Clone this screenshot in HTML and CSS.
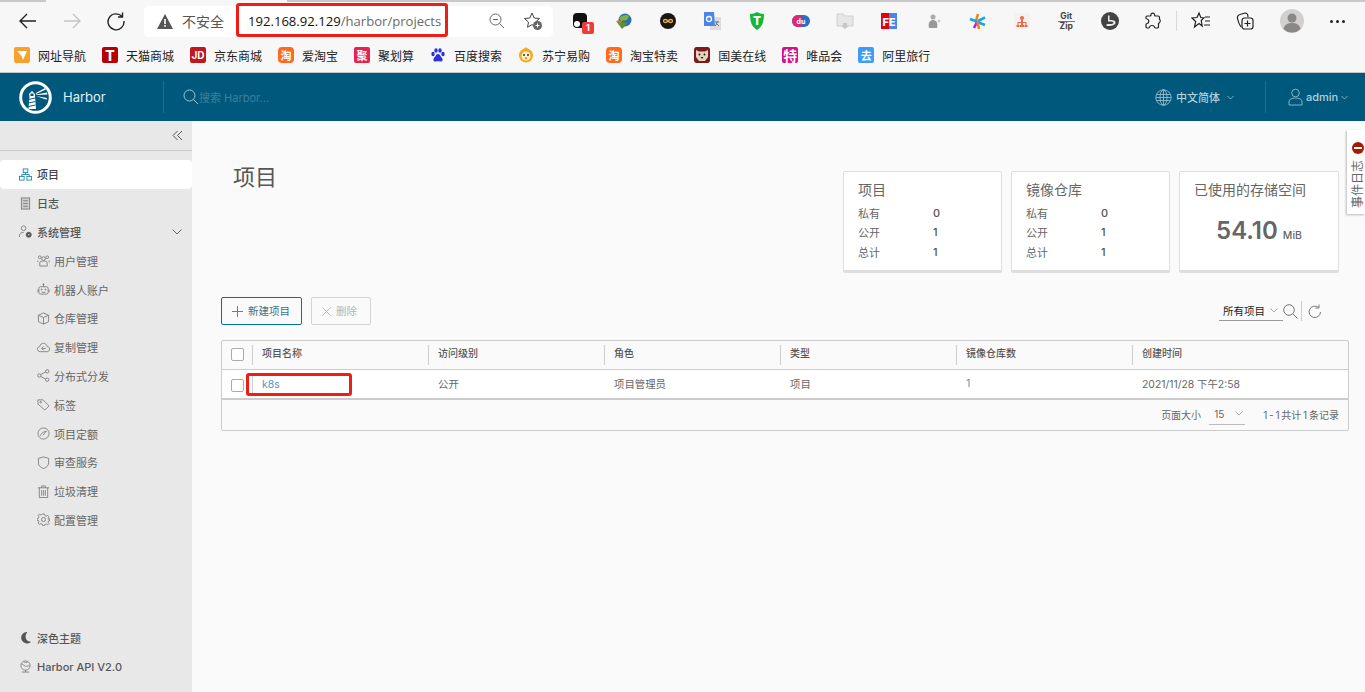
FILE: index.html
```html
<!DOCTYPE html>
<html lang="zh-CN">
<head>
    <meta charset="UTF-8">
    <title>Harbor</title>
    <link rel="stylesheet" href="styles.css">
</head>
<body>
    <!-- Browser toolbar -->
    <div class="browser-tabs"><div class="tab-active"></div></div>
    <div class="toolbar">
        <div class="nav-btn"><svg width="20" height="20" viewBox="0 0 20 20" class="tb-icon"><path d="M18 10H2M9 3l-7 7 7 7"/></svg></div>
        <div class="nav-btn"><svg width="20" height="20" viewBox="0 0 20 20" class="tb-icon off"><path d="M2 10h16M11 3l7 7-7 7"/></svg></div>
        <div class="nav-btn"><svg width="20" height="20" viewBox="0 0 20 20" class="tb-icon"><path d="M16 5.500A8 8 0 1 0 18 10M16.500 1.500v4.500h-4.500"/></svg></div>
        <div class="address">
            <svg width="16" height="15" viewBox="0 0 16 15"><path d="M8 0l8 15H0z" fill="#555"/><path d="M7.200 5h1.600v5H7.200zM7.200 11h1.600v1.700H7.200z" fill="#fff"/></svg>
            <span class="not-safe">不安全</span>
            <span class="url"><b>192.168.92.129</b>/harbor/projects</span>
            <svg class="addr-zoom" width="16" height="16" viewBox="0 0 16 16"><circle cx="6.500" cy="6.500" r="5.500"/><path d="M10.500 10.500L15 15M4 6.500h5"/></svg>
            <svg class="addr-star" width="20" height="20" viewBox="0 0 20 20"><path d="M9 2l2.200 5 5.300.5-4 3.600 1 5.200L9 13.600l-4.500 2.700 1-5.200-4-3.600L6.800 7z"/><circle cx="14.500" cy="14.500" r="4.500" fill="#666" stroke="none"/><path d="M12.500 14.500h4M14.500 12.500v4" stroke="#fff"/></svg>
        </div>
        <div class="extensions">
            <div class="ext"><svg width="16" height="18" viewBox="0 0 16 18"><rect x="1" y="1" width="14" height="15" rx="4" fill="#111"/><circle cx="5" cy="12" r="3" fill="#fff"/></svg><span class="ext-badge">1</span></div>
            <div class="ext"><svg width="18" height="18" viewBox="0 0 18 18"><circle cx="10" cy="8" r="6.500" fill="#2f6fb0"/><path d="M4 6c3-3 8-4 10-2l-2 4-6 1z" fill="#7cb342"/><path d="M1 9l12 2-6 6z" fill="#5d8f2a"/><path d="M2 8l5 1-2 3z" fill="#e0703a"/></svg></div>
            <div class="ext"><svg width="16" height="16" viewBox="0 0 16 16"><circle cx="8" cy="8" r="8" fill="#1c1712"/><path d="M8 8c-1.500-2-4.500-2-4.500 0s3 2 4.500 0 4.500-2 4.500 0-3 2-4.500 0z" fill="none" stroke="#e8b04a" stroke-width="1.300"/></svg></div>
            <div class="ext"><svg width="17" height="19" viewBox="0 0 17 19"><rect x="6" y="5" width="11" height="13" fill="#dcdcdc"/><path d="M0 0h10l1 14H0z" fill="#4a86e8"/><circle cx="5" cy="7" r="2.500" fill="none" stroke="#fff" stroke-width="1.300"/><path d="M11 10h4M13 9v1l-1.500 4M12 11l3 3" stroke="#777" fill="none"/></svg></div>
            <div class="ext"><svg width="16" height="18" viewBox="0 0 16 18"><path d="M1 2c3 0 5-1 7-2 2 1 4 2 7 2 0 8-2 13-7 16C3 15 1 10 1 2z" fill="#12b83c"/><text x="8" y="13" class="ext-t">T</text></svg></div>
            <div class="ext"><svg width="18" height="12" viewBox="0 0 18 12"><rect width="18" height="12" rx="6" fill="#2e6cc6"/><path d="M6 0h4v12H6a6 6 0 0 1 0-12z" fill="#dc2a6e"/><text x="9" y="8.500" class="ext-du">du</text></svg></div>
            <div class="ext"><svg width="18" height="18" viewBox="0 0 18 18"><path d="M1 2h6l2 2h8v10H1z" fill="#e6e6e6" stroke="#cfcfcf"/><path d="M7 11h4v3h2l-4 3-4-3h2z" fill="#c8c8c8"/></svg></div>
            <div class="ext"><svg width="16" height="16" viewBox="0 0 16 16"><rect width="8" height="16" fill="#e4000f"/><rect x="8" width="8" height="16" fill="#4a86e8"/><text x="8" y="12.500" class="ext-fe">FE</text></svg></div>
            <div class="ext"><svg width="14" height="16" viewBox="0 0 14 16"><circle cx="6" cy="4" r="2.500" fill="#aaa"/><path d="M2 15c-1-4 0-8 4-8s5 4 4 8z" fill="#999"/><circle cx="12" cy="8" r="1.500" fill="#ccc"/></svg></div>
            <div class="ext"><svg width="17" height="17" viewBox="0 0 17 17"><path d="M9 1L7 8" stroke="#f58220" stroke-width="2.600"/><path d="M1 6l7 2.500" stroke="#19a7e0" stroke-width="2.600"/><path d="M8 9l8 3M16 4.500L9 8" stroke="#19a7e0" stroke-width="2.600"/><path d="M5 15l3-6" stroke="#a32cf0" stroke-width="2.600"/><path d="M10 16L8.500 9" stroke="#f58220" stroke-width="2.600"/></svg></div>
            <div class="ext"><svg width="16" height="16" viewBox="0 0 16 16"><rect width="16" height="16" rx="2" fill="#f5f1ee"/><circle cx="8" cy="5" r="2" fill="#ea6a45"/><path d="M7 7h2v2h3.500v3h1v2h-3v-2h1v-2H9v2h1v2H6v-2h1v-2H4.500v2h1v2h-3v-2h1V9H7z" fill="#ea6a45"/></svg></div>
            <div class="ext ext-gitzip"><span>Git</span><i></i><span>Zip</span></div>
            <div class="ext"><svg width="18" height="18" viewBox="0 0 18 18"><circle cx="9" cy="9" r="9" fill="#444"/><path d="M7 3.500h1.500V8c3 0 6 .5 6 2.500 0 2-2.500 3.500-7.500 3.500-1 0-2-.5-1.500-1.500.5-1 7 .5 7-2 0-1-3-1-5.500-1z" fill="#eee"/></svg></div>
            <div class="ext ext-puzzle"><svg width="16" height="18" viewBox="0 0 16 18" class="tb-icon thin"><path d="M6 3c-.5-2.500 4-2.500 3.500 0 0 .8.500 1 1 1H13c1 0 1.500.5 1.500 1.500V7c0 .5.500.8 1 .8-.2 0-.5 3-1 3-.5 0-1 .2-1 1v3.200c0 .5-.5 1-1 1h-2c-.5 0-.8-.5-1-1-.5-2-4.500-2-5 0-.2.5-.5 1-1 1H2c-.5 0-1-.5-1-1v-2.500c0-.5.500-1 1-1 2.500-.5 2.500-4 0-4.500-.5 0-1-.5-1-1V5c0-.5.500-1 1-1h3c.5 0 1-.2 1-1z"/></svg></div>
        </div>
        <div class="tool-sep"></div>
        <div class="tool-btn"><svg width="20" height="20" viewBox="0 0 20 20" class="tb-icon thin"><path d="M8 2l1.800 4.500 3.200.3-2.800 2.700 1 5.500-3.200-2.400-4.500 3.400 1.200-5.500L1 7l5-.5zM14 6h5M14 10h5M13 14h6"/></svg></div>
        <div class="tool-btn"><svg width="20" height="20" viewBox="0 0 20 20" class="tb-icon thin"><path d="M6 16C4 13 3 10 2.500 7.500 2 5 3 4 5 3.500L10 2c2 0 3 2 3 4"/><rect x="7" y="7" width="11" height="11" rx="2.500"/><path d="M12.500 9.500v6M9.500 12.500h6"/></svg></div>
        <div class="avatar"><svg width="24" height="24" viewBox="0 0 24 24"><circle cx="12" cy="12" r="12" fill="#d2d0ce"/><circle cx="12" cy="9" r="4.500" fill="#8a8886"/><path d="M3.500 20c1-5 5-6 8.500-6s7.500 1 8.500 6a12 12 0 0 1-17 0z" fill="#8a8886"/></svg></div>
        <div class="more"><i></i><i></i><i></i></div>
    </div>

    <!-- Bookmarks -->
    <div class="bookmarks">
        <div class="bm"><span class="bm-icon orange"><svg width="10" height="10" viewBox="0 0 10 10"><path d="M0 1l10 0-4 9-1.500-4z" fill="#fff"/></svg></span>网址导航</div>
        <div class="bm"><span class="bm-icon tmall">T</span>天猫商城</div>
        <div class="bm"><span class="bm-icon jd">JD</span>京东商城</div>
        <div class="bm"><span class="bm-icon taobao">淘</span>爱淘宝</div>
        <div class="bm"><span class="bm-icon juhua">聚</span>聚划算</div>
        <div class="bm"><span class="bm-icon baidu"><svg width="16" height="16" viewBox="0 0 16 16" fill="#2932e1"><ellipse cx="3" cy="7" rx="1.700" ry="2.200"/><ellipse cx="6" cy="3.500" rx="1.700" ry="2.200"/><ellipse cx="10" cy="3.500" rx="1.700" ry="2.200"/><ellipse cx="13" cy="7" rx="1.700" ry="2.200"/><path d="M8 7c2 0 2 2 4 4 1.500 2 0 4-2 3.500-1-.2-3-.2-4 0-2 .5-3.500-1.500-2-3.500 2-2 2-4 4-4z"/></svg></span>百度搜索</div>
        <div class="bm"><span class="bm-icon suning"><svg width="16" height="16" viewBox="0 0 16 16"><circle cx="8" cy="8.500" r="7" fill="#f9a71c"/><circle cx="8" cy="2.500" r="2" fill="#f9a71c"/><circle cx="8" cy="9" r="4.500" fill="#fff3cf"/><circle cx="6" cy="8" r="1" fill="#333"/><circle cx="10" cy="8" r="1" fill="#333"/><path d="M6.500 10.500h3L8 12.500z" fill="#d9531e"/></svg></span>苏宁易购</div>
        <div class="bm"><span class="bm-icon taobao">淘</span>淘宝特卖</div>
        <div class="bm"><span class="bm-icon gome"><svg width="16" height="16" viewBox="0 0 16 16"><rect width="16" height="16" rx="2" fill="#7a1c1c"/><path d="M2 3l3 1.500h6L14 3v7l-3 4H5l-3-4z" fill="#e6d5c0"/><circle cx="5.500" cy="7.500" r="1" fill="#222"/><circle cx="10.500" cy="7.500" r="1" fill="#222"/><path d="M6.500 10h3L8 12z" fill="#222"/></svg></span>国美在线</div>
        <div class="bm"><span class="bm-icon vip">特</span>唯品会</div>
        <div class="bm"><span class="bm-icon fliggy">去</span>阿里旅行</div>
    </div>

    <!-- Harbor header -->
    <header class="app-header">
        <div class="brand">
            <svg width="33" height="33" viewBox="0 0 33 33">
                <circle cx="16.500" cy="16.500" r="14.800" fill="none" stroke="#fff" stroke-width="3"/>
                <path d="M10 13l3-3 3 3v2l1 13h-7.500l1-13z" fill="#fff"/>
                <rect x="11.500" y="12.500" width="3" height="2.500" fill="#00587c"/>
                <path d="M10 18.500l6-1.500M9.500 22l7-1.500M9.500 25.500l7-1.500" stroke="#00587c"/>
                <path d="M17 12l9-5 1 1.500-10 4.500zM17 13.500l11-2 .4 2-11.400.5zM17 15l11 2-.5 1.800z" fill="#fff"/>
            </svg>
            <span class="brand-name">Harbor</span>
        </div>
        <div class="head-search">
            <svg width="16" height="16" viewBox="0 0 16 16"><circle cx="6.500" cy="6.500" r="5.500"/><path d="M10.500 10.500L15 15"/></svg>
            <span>搜索 Harbor...</span>
        </div>
        <div class="head-lang">
            <svg width="17" height="17" viewBox="0 0 17 17"><circle cx="8.500" cy="8.500" r="7.700"/><ellipse cx="8.500" cy="8.500" rx="3.500" ry="7.700"/><path d="M8.500 .8v15.400M1.500 5.500h14M1.500 11.500h14M.8 8.500h15.400"/></svg>
            <span>中文简体</span>
            <svg class="chev" width="7" height="5" viewBox="0 0 7 5"><path d="M.5 1l3 3 3-3"/></svg>
        </div>
        <div class="head-user">
            <svg width="15" height="18" viewBox="0 0 15 18"><circle cx="7.500" cy="5" r="3.800"/><path d="M1 17v-3c0-3 3-4 6.500-4s6.500 1 6.500 4v3z"/></svg>
            <span>admin</span>
            <svg class="chev" width="7" height="5" viewBox="0 0 7 5"><path d="M.5 1l3 3 3-3"/></svg>
        </div>
    </header>

    <div class="app-body">
        <!-- Sidebar -->
        <aside class="sidebar">
            <div class="collapse"><svg width="11" height="11" viewBox="0 0 11 11"><path d="M5.500 1L1 5.500 5.500 10M10 1L5.500 5.500 10 10"/></svg></div>
            <nav class="side-nav">
                <a class="nav-item active"><svg class="nav-icon blue" viewBox="0 0 14 14"><rect x="4.500" y="1" width="5" height="4"/><rect x=".5" y="9" width="5" height="4"/><rect x="8.500" y="9" width="5" height="4"/><path d="M7 5v2M3 9V7h8v2"/></svg>项目</a>
                <a class="nav-item"><svg class="nav-icon" viewBox="0 0 14 14"><rect x="2.500" y="1" width="9" height="12" fill="#ccc"/><path d="M4.500 4h5M4.500 7h5M4.500 10h5"/></svg>日志</a>
                <a class="nav-item"><svg class="nav-icon" viewBox="0 0 14 14"><circle cx="5" cy="3.500" r="2.500"/><path d="M.5 13v-2c0-2 2-3 4.500-3"/><circle cx="10.500" cy="10.500" r="2.700" fill="#555" stroke="#555"/><circle cx="10.500" cy="10.500" r=".8" fill="#e8e8e8" stroke="none"/></svg>系统管理<svg class="nav-chev" width="10" height="6" viewBox="0 0 10 6"><path d="M.5 .5L5 5 9.500 .5"/></svg></a>
                <a class="nav-item sub"><svg class="nav-icon" viewBox="0 0 14 14"><circle cx="7" cy="5" r="2"/><circle cx="3" cy="3.500" r="1.500"/><circle cx="11" cy="3.500" r="1.500"/><path d="M3 13V9.500C3 8 5 7.500 7 7.500s4 .5 4 2V13zM1 9V7M13 9V7"/></svg>用户管理</a>
                <a class="nav-item sub"><svg class="nav-icon" viewBox="0 0 14 14"><rect x="2" y="4" width="10" height="8" rx="2"/><path d="M7 4V2M1 7v3M13 7v3M5 10h4"/><circle cx="7" cy="1.500" r=".7"/><circle cx="5" cy="7" r=".6"/><circle cx="9" cy="7" r=".6"/></svg>机器人账户</a>
                <a class="nav-item sub"><svg class="nav-icon" viewBox="0 0 14 14"><path d="M7 1l5.500 2.500v7L7 13l-5.500-2.500v-7zM1.500 3.500L7 6l5.500-2.500M7 6v7"/></svg>仓库管理</a>
                <a class="nav-item sub"><svg class="nav-icon" viewBox="0 0 14 14"><path d="M3.500 11.500C1.500 11.500 .5 10 .5 8.500S2 6 3 6c.5-2.500 2-3.500 4-3.500S10.500 4 11 6c1.500 0 2.500 1.200 2.500 2.700s-1 2.800-2.500 2.800zM9.500 8h-4M7 6L5 8l2 2"/></svg>复制管理</a>
                <a class="nav-item sub"><svg class="nav-icon" viewBox="0 0 14 14"><circle cx="11" cy="2.500" r="1.800"/><circle cx="2.500" cy="7" r="1.800"/><circle cx="11" cy="11.500" r="1.800"/><path d="M4 6l5.500-3M4 8l5.500 3"/></svg>分布式分发</a>
                <a class="nav-item sub"><svg class="nav-icon" viewBox="0 0 14 14"><path d="M1 2h5.500l6.500 6.500L8.500 13 1 6.500z"/><circle cx="4" cy="4.500" r=".8"/></svg>标签</a>
                <a class="nav-item sub"><svg class="nav-icon" viewBox="0 0 14 14"><circle cx="7" cy="7" r="6"/><path d="M3.500 9.500C4 7.500 6 5.500 10 4.500 8.500 6 7.500 8 6.500 9"/></svg>项目定额</a>
                <a class="nav-item sub"><svg class="nav-icon" viewBox="0 0 14 14"><path d="M7 1l5.500 1.500v5C12.500 10.500 10 12.500 7 13.500 4 12.500 1.500 10.500 1.500 7.500v-5z"/></svg>审查服务</a>
                <a class="nav-item sub"><svg class="nav-icon" viewBox="0 0 14 14"><path d="M1 3h12M5 3V1h4v2M2.500 3v10.500h9V3M5 5.500v6M7 5.500v6M9 5.500v6"/></svg>垃圾清理</a>
                <a class="nav-item sub"><svg class="nav-icon" viewBox="0 0 14 14"><circle cx="7" cy="7" r="2.200"/><path d="M6 1h2l.4 1.700 1.500.7 1.500-.9 1.400 1.400-.9 1.500.6 1.500L14 6v2l-1.500.4-.6 1.500.9 1.500-1.400 1.400-1.500-.9-1.500.6L8 13.500H6l-.4-1.500-1.500-.6-1.500.9-1.400-1.400.9-1.500-.6-1.500L0 8V6l1.500-.4.6-1.500-.9-1.500 1.400-1.400 1.500.9 1.500-.7z"/></svg>配置管理</a>
            </nav>
            <div class="side-bottom">
                <a class="nav-item"><svg class="nav-icon" viewBox="0 0 14 14"><path d="M9 1a6.200 6.200 0 1 0 4 10.500C8 12 5 6 9 1z" fill="#555" stroke="none"/></svg>深色主题</a>
                <a class="nav-item"><svg class="nav-icon" viewBox="0 0 14 14"><circle cx="7" cy="6" r="5"/><path d="M2.500 4.500C5 4 6 8 9 6.500l2.500-.5M5 1.500C6 3 8 3 9.500 2M3 13h8M7 11v2"/></svg>Harbor API V2.0</a>
            </div>
        </aside>

        <!-- Main content -->
        <main class="content">
            <div class="page-head">
                <h1 class="page-title">项目</h1>
                <div class="cards">
                    <div class="card">
                        <div class="card-title">项目</div>
                        <div class="stat"><span>私有</span><b>0</b></div>
                        <div class="stat"><span>公开</span><b>1</b></div>
                        <div class="stat"><span>总计</span><b>1</b></div>
                    </div>
                    <div class="card">
                        <div class="card-title">镜像仓库</div>
                        <div class="stat"><span>私有</span><b>0</b></div>
                        <div class="stat"><span>公开</span><b>1</b></div>
                        <div class="stat"><span>总计</span><b>1</b></div>
                    </div>
                    <div class="card">
                        <div class="card-title">已使用的存储空间</div>
                        <div class="storage"><strong>54.10</strong><small>MiB</small></div>
                    </div>
                </div>
            </div>

            <div class="actions">
                <button class="btn primary"><svg width="11" height="11" viewBox="0 0 11 11"><path d="M5.500 0v11M0 5.500h11"/></svg>新建项目</button>
                <button class="btn disabled"><svg width="9" height="9" viewBox="0 0 9 9"><path d="M.5 .5l8 8M8.500 .5l-8 8"/></svg>删除</button>
                <div class="filter">
                    <div class="filter-select">所有项目<svg class="chev" width="8" height="5" viewBox="0 0 8 5"><path d="M.5 .5L4 4 7.500 .5"/></svg></div>
                    <svg class="act-icon" width="15" height="15" viewBox="0 0 15 15"><circle cx="6" cy="6" r="5.300"/><path d="M10 10l4.500 4.500"/></svg>
                    <div class="filter-sep"></div>
                    <svg class="act-icon" width="13" height="14" viewBox="0 0 13 14"><path d="M10.500 3.500A5.700 5.700 0 1 0 12.500 8M11 .5v3.500H7.500"/></svg>
                </div>
            </div>

            <div class="grid">
                <div class="grid-row grid-head">
                    <div class="check-cell"><span class="check"></span></div>
                    <div class="th">项目名称</div>
                    <div class="th">访问级别</div>
                    <div class="th">角色</div>
                    <div class="th">类型</div>
                    <div class="th">镜像仓库数</div>
                    <div class="th">创建时间</div>
                </div>
                <div class="grid-row grid-data">
                    <div class="check-cell"><span class="check"></span></div>
                    <div class="td first"><a class="link">k8s</a></div>
                    <div class="td">公开</div>
                    <div class="td">项目管理员</div>
                    <div class="td">项目</div>
                    <div class="td"><a class="link">1</a></div>
                    <div class="td">2021/11/28 下午2:58</div>
                </div>
                <div class="grid-foot">
                    <span>页面大小</span>
                    <div class="page-size">15<svg class="chev" width="8" height="5" viewBox="0 0 8 5"><path d="M.5 .5L4 4 7.500 .5"/></svg></div>
                    <span class="total">1 - 1 共计 1 条记录</span>
                </div>
            </div>
        </main>
    </div>

    <!-- Side tab and the red marks drawn over the screenshot -->
    <div class="event-tab">
        <span class="event-dot"></span>
        <span class="event-text">事件日志</span>
    </div>
    <div class="mark mark-url"></div>
    <div class="mark mark-k8s"></div>
</body>
</html>
```

FILE: styles.css
```css
* {
    box-sizing: border-box;
}

html, body {
    height: 100%;
}

body {
    margin: 0;
    height: 100vh;
    overflow: hidden;
    display: flex;
    flex-direction: column;
    position: relative;
    font-family: Inter, "Noto Sans CJK SC", sans-serif;
    color: #666;
    background: #fafafa;
}

svg {
    display: block;
    flex: none;
}

/* Browser chrome */
.browser-tabs {
    height: 2px;
    background: #c8c8c8;
    padding-left: 46px;
}

.tab-active {
    width: 241px;
    height: 2px;
    background: #f7f7f7;
}

.toolbar {
    height: 38px;
    display: flex;
    align-items: center;
    background: #f7f7f7;
    padding-left: 6px;
}

.tb-icon {
    fill: none;
    stroke: #222;
    stroke-width: 1.4;
}

.tb-icon.off {
    stroke: #c4c4c4;
}

.tb-icon.thin {
    stroke-width: 1.2;
}

.nav-btn {
    width: 44px;
    display: flex;
    justify-content: center;
}

.address {
    width: 409px;
    height: 31px;
    margin-left: 6px;
    background: #fff;
    border-radius: 5px;
    display: flex;
    align-items: center;
    padding-left: 13px;
}

.not-safe {
    margin-left: 9px;
    font-size: 14px;
    color: #555;
    width: 66px;
}

.url {
    font-family: "Open Sans", sans-serif;
    font-size: 13.1px;
    color: #6a6a6a;
    white-space: nowrap;
    width: 193px;
}

.url b {
    font-weight: 400;
    color: #111;
}

.addr-zoom {
    margin-left: 48px;
    fill: none;
    stroke: #666;
}

.addr-star {
    margin-left: 18px;
    fill: none;
    stroke: #444;
}

.extensions {
    display: flex;
    margin-left: 5px;
}

.ext {
    width: 44.2px;
    height: 24px;
    display: flex;
    align-items: center;
    justify-content: center;
    position: relative;
}

.ext-puzzle {
    width: 42px;
    justify-content: flex-start;
    padding-left: 13px;
}

.ext-badge {
    position: absolute;
    left: 24px;
    top: 13px;
    width: 12px;
    height: 12px;
    background: #ee3b3b;
    border-radius: 2px;
    color: #fff;
    font-size: 9px;
    font-weight: 700;
    line-height: 12px;
    text-align: center;
}

.ext-t {
    font-size: 12px;
    font-weight: 800;
    fill: #fff;
    text-anchor: middle;
}

.ext-du {
    font-size: 7px;
    font-weight: 700;
    fill: #fff;
    text-anchor: middle;
}

.ext-fe {
    font-size: 11px;
    font-weight: 800;
    fill: #fff;
    text-anchor: middle;
}

.ext-gitzip {
    flex-direction: column;
    font-size: 8.5px;
    font-weight: 700;
    line-height: 9px;
    color: #444;
}

.ext-gitzip i {
    width: 17px;
    height: 1px;
    background: #777;
}

.tool-sep {
    width: 1px;
    height: 20px;
    background: #d8d8d8;
    margin: 0 2px;
}

.tool-btn {
    width: 44px;
    display: flex;
    justify-content: center;
}

.avatar {
    margin-left: 13px;
}

.more {
    display: flex;
    gap: 3px;
    margin-left: 26px;
}

.more i {
    width: 3px;
    height: 3px;
    border-radius: 50%;
    background: #222;
}

.bookmarks {
    height: 33px;
    display: flex;
    align-items: center;
    gap: 16px;
    padding: 0 0 2px 14px;
    background: #f7f7f7;
    border-bottom: 1px solid #c6c6c6;
    font-size: 12px;
    color: #222;
}

.bm {
    display: flex;
    align-items: center;
    gap: 8px;
}

.bm-icon {
    width: 16px;
    height: 16px;
    display: flex;
    align-items: center;
    justify-content: center;
    color: #fff;
    font-size: 11px;
    font-weight: 700;
    border-radius: 2px;
    overflow: hidden;
}

.orange { background: #f9a12e; }
.tmall { background: #b80000; font-size: 14px; font-weight: 800; }
.jd { background: #c4161f; font-size: 10px; }
.taobao { background: #ff6a1f; border-radius: 4px; }
.juhua { background: #e8204f; }
.vip { background: #d6108b; font-size: 14px; }
.fliggy { background: #3d9cf5; }

/* Harbor header */
.app-header {
    height: 48px;
    flex: none;
    display: flex;
    align-items: center;
    background: #00587c;
    color: #fff;
}

.brand {
    width: 164px;
    height: 32px;
    display: flex;
    align-items: center;
    padding-left: 19px;
    gap: 11px;
    border-right: 1px solid #1f6f8e;
}

.brand-name {
    font-size: 13px;
    color: #e4eff4;
}

.head-search {
    display: flex;
    align-items: center;
    padding-left: 19px;
    font-size: 11px;
    color: #3d8099;
    flex: 1;
}

.head-search svg {
    fill: none;
    stroke: #a6c6d3;
}

.head-lang {
    display: flex;
    align-items: center;
    font-size: 11px;
    font-weight: 500;
    color: #b3d0db;
    width: 110px;
}

.head-lang svg, .head-user svg {
    fill: none;
    stroke: #a6c6d3;
    stroke-width: .8;
}

.head-lang span {
    margin: 0 6px 0 4px;
}

.head-lang .chev {
    margin-left: 1px;
}

.head-user {
    height: 32px;
    width: 100px;
    border-left: 1px solid #1f6f8e;
    display: flex;
    align-items: center;
    padding-left: 22px;
    font-size: 11px;
    font-weight: 500;
    color: #b3d0db;
}

.head-user span {
    margin: 0 3px 0 3px;
}

/* Body */
.app-body {
    flex: 1;
    display: flex;
    min-height: 0;
}

.sidebar {
    width: 192px;
    flex: none;
    background: #e8e8e8;
    display: flex;
    flex-direction: column;
    padding-bottom: 11px;
}

.collapse {
    height: 30px;
    flex: none;
    display: flex;
    align-items: center;
    justify-content: flex-end;
    padding: 0 9px 0 0;
    border-bottom: 1px solid #ccc;
}

.collapse svg {
    fill: none;
    stroke: #555;
}

.side-nav {
    margin-top: 9px;
}

.nav-item {
    height: 28.8px;
    display: flex;
    align-items: center;
    padding-left: 19px;
    gap: 5px;
    font-size: 11px;
    font-weight: 500;
    color: #565656;
    white-space: nowrap;
}

.nav-item.active {
    background: #fff;
    border-radius: 4px;
    color: #444;
}

.nav-item.sub {
    padding-left: 37px;
    gap: 4px;
    font-weight: 400;
    color: #666;
}

.nav-icon {
    width: 13px;
    height: 13px;
    fill: none;
    stroke: #777;
    stroke-width: .9;
}

.nav-icon.blue {
    stroke: #0f7fa8;
}

.nav-chev {
    margin-left: auto;
    margin-right: 10px;
    fill: none;
    stroke: #666;
}

.side-bottom {
    margin-top: auto;
}

.content {
    flex: 1;
    padding: 36px 16px 0 29px;
    min-width: 0;
}

.page-head {
    display: flex;
    justify-content: space-between;
    align-items: flex-start;
    padding-right: 10px;
}

.page-title {
    margin: 0 0 0 12px;
    font-size: 22px;
    font-weight: 400;
    line-height: 40px;
    color: #555;
}

.cards {
    display: flex;
    gap: 9px;
    margin-top: 14px;
}

.card {
    width: 159px;
    height: 102px;
    background: #fff;
    border: 1px solid #dedede;
    border-bottom-width: 3px;
    border-radius: 2px;
    padding: 8px 14px 0;
}

.card:last-child {
    width: 160px;
}

.card-title {
    font-size: 14px;
    line-height: 20px;
    margin-bottom: 3px;
    color: #666;
}

.stat {
    display: flex;
    height: 19.5px;
    align-items: center;
    font-size: 11px;
}

.stat span {
    width: 75px;
}

.stat b {
    font-weight: 500;
    color: #555;
}

.storage {
    display: flex;
    justify-content: center;
    align-items: baseline;
    gap: 5px;
    margin-top: 16px;
}

.storage strong {
    font-size: 24px;
    font-weight: 600;
    color: #666;
}

.storage small {
    font-size: 10.5px;
    font-weight: 500;
}

.actions {
    height: 28px;
    margin-top: 24px;
    display: flex;
    align-items: center;
    gap: 9px;
    padding-right: 28px;
}

.btn {
    height: 28px;
    display: flex;
    align-items: center;
    gap: 5px;
    background: none;
    font-family: inherit;
    font-size: 10.5px;
    border-radius: 2px;
    padding: 0 10px 2px;
}

.btn svg {
    fill: none;
    margin-top: 2px;
}

.btn.primary {
    width: 81px;
    border: 1px solid #0072a3;
    color: #3f6f85;
}

.btn.primary svg {
    stroke: #4c8aa6;
}

.btn.disabled {
    width: 60px;
    border: 1px solid #d4d4d4;
    color: #b5b5b5;
}

.btn.disabled svg {
    stroke: #bbb;
}

.filter {
    margin-left: auto;
    display: flex;
    align-items: center;
}

.filter-select {
    width: 64px;
    height: 20px;
    display: flex;
    align-items: center;
    padding-left: 4px;
    font-size: 10.5px;
    color: #222;
    border-bottom: 1px solid #9a9a9a;
    gap: 5px;
}

.chev {
    fill: none;
    stroke: #a6c6d3;
}

.filter-select .chev, .page-size .chev {
    stroke: #aaa;
}

.act-icon {
    fill: none;
    stroke: #777;
}

.filter-sep {
    width: 1px;
    height: 20px;
    background: #ccc;
    margin: 0 6px 0 3px;
}

.grid {
    margin-top: 15px;
    border: 1px solid #ccc;
    border-radius: 2px;
    font-size: 10.4px;
}

.grid-row {
    display: grid;
    grid-template-columns: 30px repeat(5, 176px) 1fr;
    align-items: center;
}

.grid-head {
    height: 29px;
    border-bottom: 1px solid #ccc;
    font-size: 10px;
    font-weight: 500;
    color: #565656;
}

.grid-data {
    height: 30px;
    background: #fff;
    border-bottom: 2px solid #ccc;
}

.check-cell {
    display: flex;
    justify-content: center;
    padding-left: 1px;
}

.check {
    width: 13px;
    height: 13px;
    border: 1px solid #aaa;
    border-radius: 2px;
    background: #fff;
}

.grid-head .check {
    margin-top: -2px;
}

.grid-data .check {
    margin-top: 3px;
}

.th {
    height: 20px;
    line-height: 16px;
    border-left: 1px solid #ccc;
    padding-left: 9px;
}

.td {
    padding: 0 0 2px 10px;
    white-space: nowrap;
}

.td.first {
    height: 20px;
    line-height: 22px;
    padding: 0 0 0 9px;
    border-left: 1px solid #ccc;
}

.link {
    color: #5596bd;
}

.grid-foot {
    height: 30px;
    display: flex;
    align-items: center;
    justify-content: flex-end;
    padding: 0 9px 2px 0;
    font-size: 10px;
    color: #666;
}

.page-size {
    width: 36px;
    height: 20px;
    margin: 2px 0 0 8px;
    padding: 0 0 2px 5px;
    display: flex;
    align-items: center;
    gap: 11px;
    border-bottom: 1px solid #bbb;
}

.total {
    margin-left: 18px;
    word-spacing: -1px;
}

/* Overlays */
.event-tab {
    position: absolute;
    left: 1347px;
    top: 130px;
    width: 18px;
    height: 84px;
    background: #fff;
    box-shadow: -1px 1px 2px #bbb;
    display: flex;
    flex-direction: column;
    align-items: center;
    padding: 12px 0 0 3px;
}

.event-dot {
    width: 12px;
    height: 12px;
    border-radius: 50%;
    background: #a51b00;
    display: flex;
    align-items: center;
    justify-content: center;
}

.event-dot::after {
    content: "";
    width: 8px;
    height: 2px;
    background: #fff;
}

.event-text {
    margin-top: 6px;
    font-size: 12px;
    line-height: 12px;
    color: #666;
    writing-mode: vertical-rl;
    text-orientation: sideways;
    transform: rotate(180deg);
}

.mark {
    position: absolute;
    border: 3px solid #f01d14;
    border-radius: 3px;
}

.mark-url {
    left: 236px;
    top: 3px;
    width: 212px;
    height: 34px;
}

.mark-k8s {
    left: 246px;
    top: 373px;
    width: 106px;
    height: 23px;
}
```
